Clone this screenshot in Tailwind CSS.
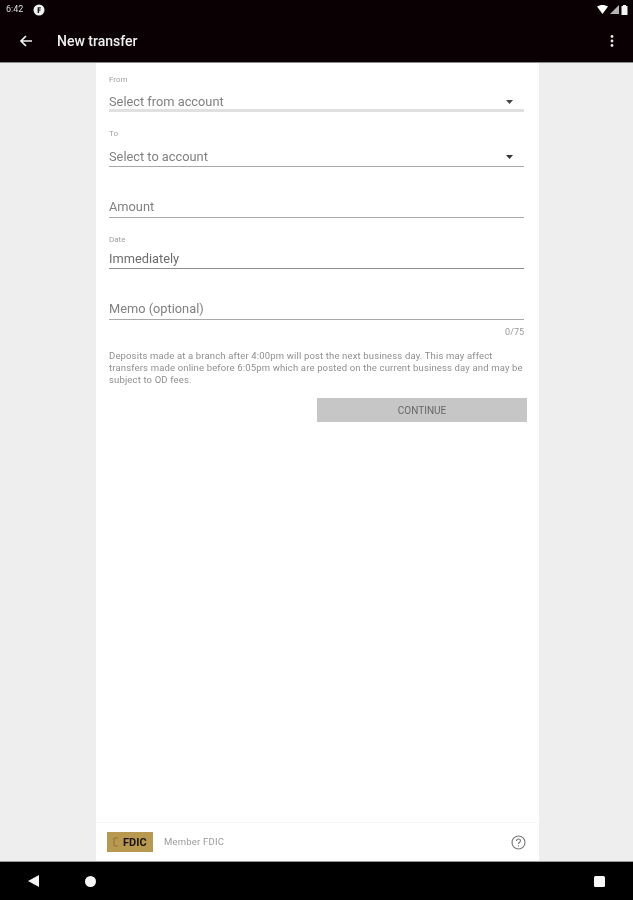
<!doctype html>
<html><head><meta charset="utf-8"><script src="https://cdn.jsdelivr.net/npm/@tailwindcss/browser@4"></script></head>
<body class="m-0 bg-[#eeeeee]">
<div class="w-[633px] h-[900px] flex flex-col overflow-hidden bg-[#eeeeee] font-['Roboto',sans-serif] blur-[0.5px]">
  <header class="h-[63px] shrink-0 bg-[#0a0003] border-b border-[#8a8a86] flex flex-col">
    <div class="h-[19px] flex items-center justify-between pl-[6px] pr-[5px]">
      <div class="flex items-center gap-[8px]">
        <span class="text-[9px] leading-none text-[#dddddd] w-[19px]">6:42</span>
        <svg width="12" height="12" viewBox="0 0 12 12"><circle cx="6" cy="6" r="5.500" fill="#f2f2f2"/><path d="M4.600 9V3.200h3.200v1.400H6.100v.9h1.400v1.200H6.100V9z" fill="#222"/></svg>
      </div>
      <div class="flex items-center gap-[2px]">
        <svg width="11" height="9" viewBox="0 0 11 9"><path d="M0 1.600C3-.5 8-.5 11 1.600L5.500 9z" fill="#fff"/></svg>
        <svg width="9" height="9" viewBox="0 0 9 9"><path d="M9 0v9H0z" fill="#b5b5b5"/></svg>
        <svg width="7" height="10" viewBox="0 0 7 10"><path d="M2 0h3v1h1.500v9H.5V1H2z" fill="#f4f4f4"/></svg>
      </div>
    </div>
    <div class="flex-1 flex items-center pl-[19px] pr-[19px]">
      <svg width="14" height="14" viewBox="0 0 14 14" fill="none" stroke="#f2f2f2" stroke-width="1.700"><path d="M13 7H2M7 2 2 7l5 5"/></svg>
      <h1 class="ml-[24px] text-[14px] font-medium text-[#f0f0f0] leading-none">New transfer</h1>
      <svg class="ml-auto" width="4" height="14" viewBox="0 0 4 14" fill="#e8e8e8"><circle cx="2" cy="2.500" r="1.400"/><circle cx="2" cy="7" r="1.400"/><circle cx="2" cy="11.500" r="1.400"/></svg>
    </div>
  </header>
  <main class="flex-1 w-[443px] ml-[96px] bg-white flex flex-col min-h-0">
    <form class="flex-1 pl-[13px] pr-[15px] text-[#808080]">
      <div class="h-[49px] pt-[12px] border-b-[3px] border-[#e0e0e0]">
        <div class="text-[8px] leading-[10px] text-[#a0a0a0]">From</div>
        <div class="flex justify-between items-center mt-[9px]">
          <span class="text-[12.800px] leading-[15px]">Select from account</span>
          <svg class="mr-[11px]" width="7" height="4" viewBox="0 0 7 4"><path d="M0 0h7L3.500 4z" fill="#444"/></svg>
        </div>
      </div>
      <div class="h-[55px] pt-[17px] border-b border-[#a8a8a8]">
        <div class="text-[8px] leading-[10px] text-[#a0a0a0]">To</div>
        <div class="flex justify-between items-center mt-[10px]">
          <span class="text-[12.800px] leading-[15px]">Select to account</span>
          <svg class="mr-[11px]" width="7" height="4" viewBox="0 0 7 4"><path d="M0 0h7L3.500 4z" fill="#333"/></svg>
        </div>
      </div>
      <div class="h-[51px] pt-[32px] border-b border-[#a8a8a8]">
        <span class="block text-[12.800px] leading-[15px]">Amount</span>
      </div>
      <div class="h-[51px] pt-[17px] border-b border-[#8c8c8c]">
        <div class="text-[8px] leading-[10px] text-[#a0a0a0]">Date</div>
        <span class="block mt-[6px] text-[12.800px] leading-[15px] text-[#6c6c6c]">Immediately</span>
      </div>
      <div class="h-[51px] pt-[32px] border-b border-[#a8a8a8]">
        <span class="block text-[12.800px] leading-[15px]">Memo (optional)</span>
      </div>
      <div class="text-right text-[9px] leading-[11px] mt-[7px] text-[#999999]">0/75</div>
      <p class="mt-[12px] text-[9.500px] leading-[12px] tracking-[0.15px] text-[#8f8f8f] w-[417px]">Deposits made at a branch after 4:00pm will post the next business day. This may affect transfers made online before 6:05pm which are posted on the current business day and may be subject to OD fees.</p>
      <div class="flex justify-end -mr-[3px] mt-[12px]">
        <button type="button" class="w-[210px] h-[24px] bg-[#c6c6c6] text-[10px] text-[#666666] flex items-center justify-center">CONTINUE</button>
      </div>
    </form>
    <footer class="h-[39px] shrink-0 border-t border-[#f8f8f8] flex items-center pl-[11px] pr-[13px]">
      <div class="w-[46px] h-[20px] bg-[#b8994f] flex items-center pl-[5px] gap-[3px]">
        <svg width="8" height="10" viewBox="0 0 8 10" fill="none" stroke="#8c7238" stroke-width="1"><path d="M6 1H2v8h4"/></svg>
        <span class="text-[11px] font-bold leading-none text-[#1a1410]">FDIC</span>
      </div>
      <span class="ml-[11px] text-[9.500px] text-[#9a9a9a] tracking-[0.2px]">Member FDIC</span>
      <svg class="ml-auto" width="15" height="15" viewBox="0 0 15 15" fill="none" stroke="#777" stroke-width="1.100"><circle cx="7.500" cy="7.500" r="6.500"/><path d="M5.500 6c0-1.300 1-2 2-2s2 .7 2 1.800c0 1.400-2 1.500-2 3.200"/><path d="M7.500 10.300v1.200"/></svg>
    </footer>
  </main>
  <nav class="h-[39px] shrink-0 bg-black border-t border-[#999999] flex items-center">
    <svg class="ml-[28px]" width="11" height="12" viewBox="0 0 11 12"><path d="M11 0v12L0 6z" fill="#f4f4f4"/></svg>
    <svg class="ml-[46px]" width="11" height="11" viewBox="0 0 11 11"><circle cx="5.500" cy="5.500" r="5.500" fill="#f8f8f8"/></svg>
    <svg class="ml-auto mr-[28px]" width="11" height="11" viewBox="0 0 11 11"><rect width="11" height="11" rx="1.500" fill="#f8f8f8"/></svg>
  </nav>
</div>
</body></html>
